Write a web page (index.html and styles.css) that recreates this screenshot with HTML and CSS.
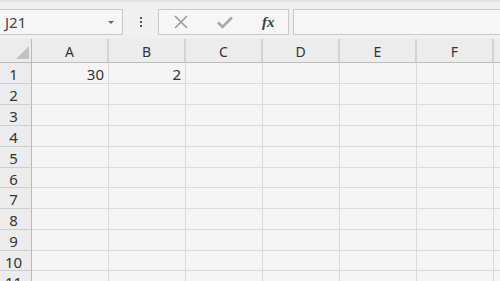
FILE: index.html
```html
<!DOCTYPE html>
<html lang="ja">
<head>
<meta charset="utf-8">
<link rel="stylesheet" href="styles.css">
</head>
<body>
<div class="toolbar">
  <div class="namebox">
    <span class="ref">J21</span>
    <span class="caret"></span>
  </div>
  <div class="dots"><i></i><i></i><i></i></div>
  <div class="fbuttons">
    <svg class="ico" width="16" height="16" viewBox="0 0 16 16"><path d="M2 2 L14 14 M14 2 L2 14" stroke="#9a9a9a" stroke-width="1.6" fill="none"/></svg>
    <svg class="ico" width="18" height="16" viewBox="0 0 18 16"><path d="M2 8.5 L6.5 13 L16 3.5" stroke="#a8a8a8" stroke-width="2.6" fill="none"/></svg>
    <span class="fx">fx</span>
  </div>
  <div class="fbar"></div>
</div>
<div class="sheet">
  <div class="corner"><span class="tri"></span></div>
  <div class="ch">A</div><div class="ch">B</div><div class="ch">C</div><div class="ch">D</div><div class="ch">E</div><div class="ch">F</div><div class="ch last"></div>

  <div class="rh">1</div><div class="c num">30</div><div class="c num">2</div><div class="c"></div><div class="c"></div><div class="c"></div><div class="c"></div><div class="c"></div>
  <div class="rh">2</div><div class="c"></div><div class="c"></div><div class="c"></div><div class="c"></div><div class="c"></div><div class="c"></div><div class="c"></div>
  <div class="rh">3</div><div class="c"></div><div class="c"></div><div class="c"></div><div class="c"></div><div class="c"></div><div class="c"></div><div class="c"></div>
  <div class="rh">4</div><div class="c"></div><div class="c"></div><div class="c"></div><div class="c"></div><div class="c"></div><div class="c"></div><div class="c"></div>
  <div class="rh">5</div><div class="c"></div><div class="c"></div><div class="c"></div><div class="c"></div><div class="c"></div><div class="c"></div><div class="c"></div>
  <div class="rh">6</div><div class="c"></div><div class="c"></div><div class="c"></div><div class="c"></div><div class="c"></div><div class="c"></div><div class="c"></div>
  <div class="rh">7</div><div class="c"></div><div class="c"></div><div class="c"></div><div class="c"></div><div class="c"></div><div class="c"></div><div class="c"></div>
  <div class="rh">8</div><div class="c"></div><div class="c"></div><div class="c"></div><div class="c"></div><div class="c"></div><div class="c"></div><div class="c"></div>
  <div class="rh">9</div><div class="c"></div><div class="c"></div><div class="c"></div><div class="c"></div><div class="c"></div><div class="c"></div><div class="c"></div>
  <div class="rh">10</div><div class="c"></div><div class="c"></div><div class="c"></div><div class="c"></div><div class="c"></div><div class="c"></div><div class="c"></div>
  <div class="rh">11</div><div class="c"></div><div class="c"></div><div class="c"></div><div class="c"></div><div class="c"></div><div class="c"></div><div class="c"></div>
</div>
</body>
</html>
```
FILE: styles.css
```css
html, body {
  margin: 0;
  padding: 0;
  width: 500px;
  height: 281px;
  overflow: hidden;
  background: #f3f3f3;
  font-family: "Noto Sans", "Noto Sans CJK JP", sans-serif;
  color: #333;
}
.toolbar {
  height: 39px;
  box-sizing: border-box;
  border-top: 2px solid #e4e4e4;
  padding-top: 7px;
  display: flex;
  align-items: flex-start;
  background: #f0f0f0;
}
.namebox {
  margin-left: -1px;
  width: 124px;
  height: 26px;
  box-sizing: border-box;
  border: 1px solid #c9c9c9;
  background: #f6f6f6;
  display: flex;
  align-items: center;
  justify-content: space-between;
  padding: 0 8px 0 5px;
}
.ref {
  font-size: 15px;
  color: #444;
  line-height: 1;
}
.caret {
  width: 0;
  height: 0;
  border-left: 3px solid transparent;
  border-right: 3px solid transparent;
  border-top: 3px solid #666;
  margin-top: 1px;
}
.dots {
  width: 35px;
  height: 26px;
  display: flex;
  flex-direction: column;
  align-items: center;
  justify-content: center;
  gap: 2px;
}
.dots i {
  display: block;
  width: 2px;
  height: 2px;
  background: #555;
}
.fbuttons {
  width: 131px;
  height: 26px;
  box-sizing: border-box;
  border: 1px solid #c9c9c9;
  background: #f6f6f6;
  display: flex;
  align-items: center;
  padding: 0 0 0 14px;
  gap: 27px;
}
.fx {
  font-family: "Liberation Serif", "DejaVu Serif", serif;
  font-style: italic;
  font-weight: bold;
  font-size: 15px;
  color: #3f3f3f;
  margin-left: 1px;
}
.fbar {
  margin-left: 4px;
  flex: 1;
  height: 26px;
  box-sizing: border-box;
  border: 1px solid #c9c9c9;
  border-right: none;
  background: #f6f6f6;
}
.sheet {
  display: grid;
  grid-template-columns: 32px repeat(6, 77px) 20px;
  grid-template-rows: 24px repeat(5, 21px) 20px 21px 21px 21px 20px 21px;
  background: #f5f5f5;
}
.corner {
  background: #ececec;
  border-right: 1px solid #b9b9b9;
  border-bottom: 1px solid #b9b9b9;
  box-sizing: border-box;
  position: relative;
}
.tri {
  position: absolute;
  right: 2px;
  bottom: 3px;
  width: 0;
  height: 0;
  border-left: 13px solid transparent;
  border-bottom: 13px solid #c2c2c2;
}
.ch {
  background: #ececec;
  border-right: 2px solid #d3d3d3;
  border-bottom: 1px solid #bdbdbd;
  box-sizing: border-box;
  display: flex;
  align-items: center;
  justify-content: center;
  font-size: 14px;
  color: #333;
  padding-top: 2px;
}
.ch.last {
  border-right: none;
}
.rh {
  background: #ececec;
  border-right: 1px solid #b9b9b9;
  border-bottom: 1px solid #cfcfcf;
  box-sizing: border-box;
  display: flex;
  align-items: center;
  justify-content: center;
  padding-right: 4px;
  padding-top: 2px;
  font-size: 15px;
  color: #333;
}
.c {
  border-right: 1px solid #dadada;
  border-bottom: 1px solid #dadada;
  box-sizing: border-box;
  font-size: 15px;
  color: #333;
}
.num {
  display: flex;
  align-items: center;
  justify-content: flex-end;
  padding-right: 4px;
  padding-top: 1px;
}
```
